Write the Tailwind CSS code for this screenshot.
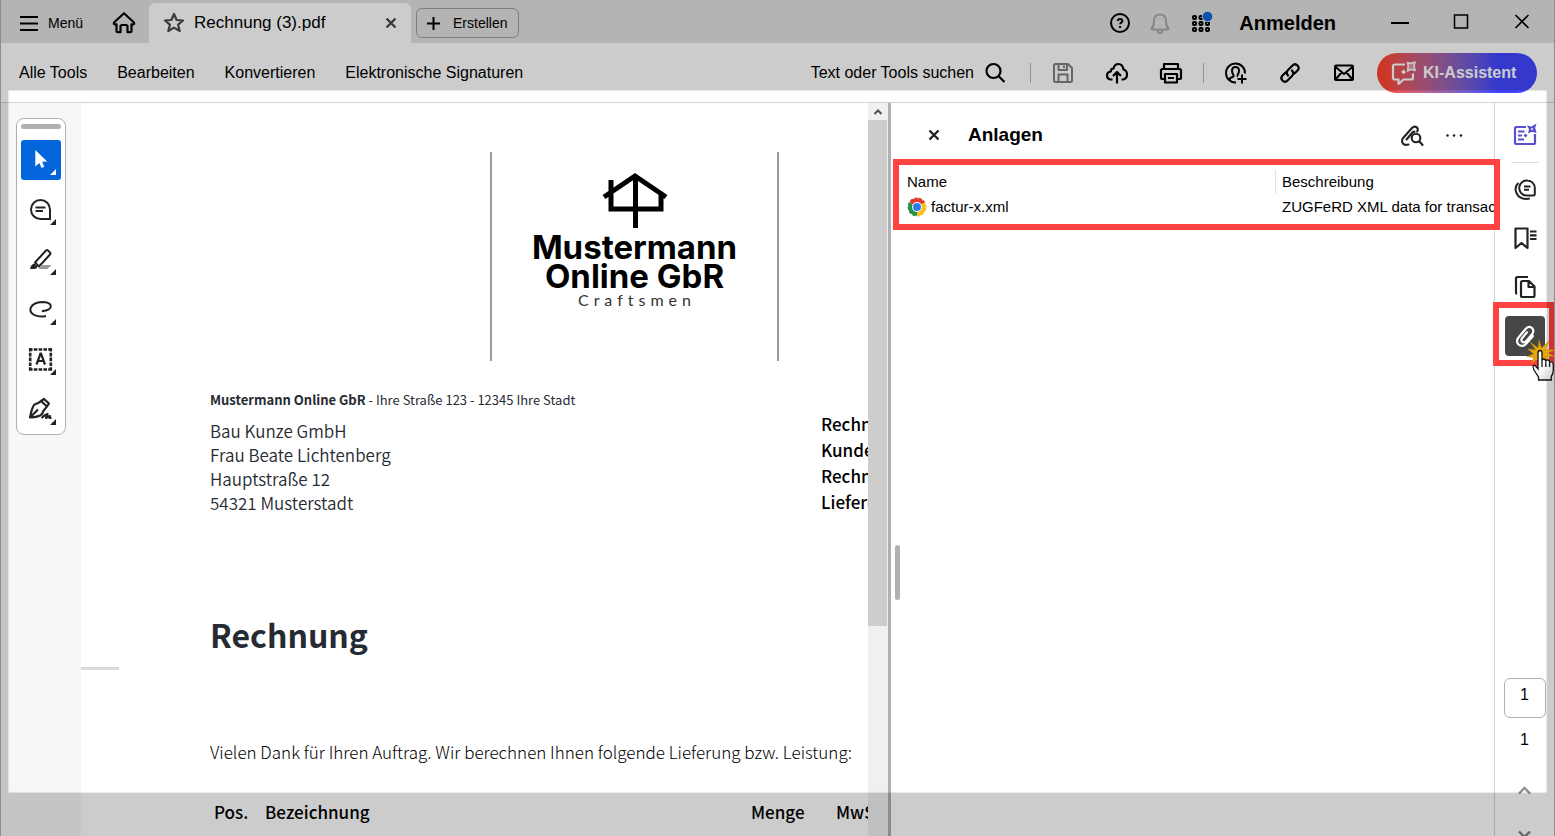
<!DOCTYPE html>
<html lang="de">
<head>
<meta charset="utf-8">
<title>Rechnung (3).pdf</title>
<script src="https://cdn.jsdelivr.net/npm/@tailwindcss/browser@4"></script>
</head>
<body class="relative flex h-screen flex-col overflow-hidden border-x border-[#8f8f8f] bg-white font-['Liberation_Sans',Arial,sans-serif] text-black">

<!-- Title bar -->
<header class="flex h-[43px] shrink-0 items-center bg-[#e1e1e1]">
  <button class="ml-[18px] flex items-center gap-[9px] pt-[2px] text-sm">
    <svg class="h-5 w-5" viewBox="0 0 20 20" fill="none" stroke="currentColor" stroke-width="2"><path d="M1 4h18M1 10.500h18M1 17h18"/></svg>
    Menü
  </button>
  <button class="ml-[29px] pt-[2px]" aria-label="Startseite">
    <svg class="h-6 w-6" viewBox="0 0 24 24" fill="none" stroke="currentColor" stroke-width="2.200" stroke-linejoin="round"><path d="M12 2.200 22 11.500q.6 1.800-1.200 1.900H19.500v6.400q0 1.400-1.400 1.400H15.500v-5.500q0-1.700-1.700-1.700h-3.600q-1.700 0-1.700 1.700v5.500H5.900q-1.400 0-1.400-1.400v-6.400H3.200q-1.800-.1-1.200-1.900Z"/></svg>
  </button>
  <div class="ml-[13px] mt-[3px] flex h-10 w-[262px] items-center rounded-t-md bg-white px-[14px]">
    <button aria-label="Favorit" class="text-[#4a4a4a]">
      <svg class="h-[22px] w-[22px]" viewBox="0 0 22 22" fill="none" stroke="currentColor" stroke-width="2.200" stroke-linejoin="round"><path d="m11 2 2.600 6 6.400.5-4.900 4.200 1.600 6.300-5.700-3.400-5.700 3.400 1.600-6.300L2 8.500 8.400 8Z"/></svg>
    </button>
    <span class="ml-[9px] flex-1 text-[17px]">Rechnung (3).pdf</span>
    <button aria-label="Tab schließen" class="text-[#4a4a4a]">
      <svg class="h-3 w-3" viewBox="0 0 12 12" stroke="currentColor" stroke-width="2.400"><path d="m1.500 1.500 9 9m0-9-9 9"/></svg>
    </button>
  </div>
  <button class="ml-[5px] mt-[3px] flex h-[30px] w-[103px] items-center gap-[13px] rounded-md border border-[#a0a0a0] pl-[10px] text-sm">
    <svg class="h-[13px] w-[13px]" viewBox="0 0 13 13" stroke="currentColor" stroke-width="2"><path d="M6.500 0v13M0 6.500h13"/></svg>
    Erstellen
  </button>
  <div class="ml-auto flex items-center">
    <button class="pt-[2px]" aria-label="Hilfe">
      <svg class="h-[22px] w-[22px]" viewBox="0 0 22 22" fill="none" stroke="currentColor" stroke-width="2"><circle cx="11" cy="11" r="9"/><path d="M8.800 9q0-2 2.300-2t2.200 1.900q0 1-1.100 1.700-1.100.7-1.100 1.700M11.100 14v1.900"/></svg>
    </button>
    <button class="ml-[18px] pt-[2px] text-[#a9a9a9]" aria-label="Benachrichtigungen">
      <svg class="h-[22px] w-[22px]" viewBox="0 0 22 22" fill="none" stroke="currentColor" stroke-width="2" stroke-linejoin="round"><path d="M2.500 16.500q2.500-2.500 2.500-7.500 0-6.500 6-6.500t6 6.500q0 5 2.500 7.500 0 1-1 1h-15q-1 0-1-1ZM8.700 18q0 3 2.300 3t2.300-3"/></svg>
    </button>
    <button class="ml-[19px]" aria-label="Apps">
      <svg class="h-6 w-6" viewBox="0 0 24 24" fill="none" stroke="currentColor" stroke-width="2"><g><rect x="3" y="6" width="3" height="3" rx="1"/><rect x="9.500" y="6" width="3" height="3" rx="1"/><rect x="3" y="12" width="3" height="3" rx="1"/><rect x="9.500" y="12" width="3" height="3" rx="1"/><rect x="16" y="12" width="3" height="3" rx="1"/><rect x="3" y="18" width="3" height="3" rx="1"/><rect x="9.500" y="18" width="3" height="3" rx="1"/><rect x="16" y="18" width="3" height="3" rx="1"/></g><circle cx="17.500" cy="6.500" r="5.200" fill="#0e66dc" stroke="#e1e1e1" stroke-width="1"/></svg>
    </button>
    <a href="#" class="ml-[25px] pt-[2px] text-xl font-bold">Anmelden</a>
    <button class="ml-[54px]" aria-label="Minimieren"><svg class="h-5 w-5" viewBox="0 0 20 20" stroke="currentColor" stroke-width="2"><path d="M1 11h18"/></svg></button>
    <button class="ml-[41px]" aria-label="Maximieren"><svg class="h-5 w-5" viewBox="0 0 20 20" fill="none" stroke="currentColor" stroke-width="1.500"><path d="M3.500 3h13v13h-13z"/></svg></button>
    <button class="ml-[41px] mr-[22px]" aria-label="Schließen"><svg class="h-5 w-5" viewBox="0 0 20 20" stroke="currentColor" stroke-width="1.600"><path d="m3.500 3 13 13m0-13-13 13"/></svg></button>
  </div>
</header>

<!-- Toolbar -->
<div class="flex h-[60px] shrink-0 items-center border-b border-[#d2d2d2] text-base">
  <nav class="ml-[18px] flex gap-[30px]">
    <a href="#">Alle Tools</a><a href="#">Bearbeiten</a><a href="#">Konvertieren</a><a href="#">Elektronische Signaturen</a>
  </nav>
  <div class="ml-auto flex items-center">
    <button class="flex items-center gap-[10px]">Text oder Tools suchen
      <svg class="h-[22px] w-[22px]" viewBox="0 0 22 22" fill="none" stroke="currentColor" stroke-width="2.200"><circle cx="9.500" cy="9" r="7"/><path d="m14.500 14 6 6"/></svg>
    </button>
    <span class="ml-6 h-5 w-px bg-[#b8b8b8]"></span>
    <button class="ml-5 text-[#808080]" aria-label="Speichern">
      <svg class="h-6 w-6" viewBox="0 0 24 24" fill="none" stroke="currentColor" stroke-width="2" stroke-linejoin="round"><path d="M4.500 3H17l4 4v12.500q0 1.500-1.500 1.500h-15Q3 21 3 19.500v-15Q3 3 4.500 3ZM7.500 3v6h8.500V3M7.500 21v-7.500h9V21M13 4.500v2.500"/></svg>
    </button>
    <button class="ml-[30px]" aria-label="In die Cloud laden">
      <svg class="h-6 w-6" viewBox="0 0 24 24" fill="none" stroke="currentColor" stroke-width="2.200" stroke-linejoin="round"><path d="M7.500 18.500H5.500Q2 18 2 14.500t4-4q-.5-3 2.500-3Q9.500 3 13.500 3t5 5.500q3.500 1 3.500 5t-3.800 5h-1.700M12 22.500V11.500M8 15l4-4 4 4"/></svg>
    </button>
    <button class="ml-[30px]" aria-label="Drucken">
      <svg class="h-6 w-6" viewBox="0 0 24 24" fill="none" stroke="currentColor" stroke-width="2.200" stroke-linejoin="round"><path d="M5 8V3h14v5M5.500 18H3q-1 0-1-1V9.500Q2 8 3.500 8h17Q22 8 22 9.500V17q0 1-1 1h-2.500M6 13h12v8.500H6zM9 17h6"/></svg>
    </button>
    <span class="ml-5 h-5 w-px bg-[#b8b8b8]"></span>
    <button class="ml-[20px]" aria-label="Freigeben">
      <svg class="h-6 w-6" viewBox="0 0 24 24" fill="none" stroke="currentColor" stroke-width="2"><path d="M21 12.500A9.500 9.500 0 1 0 12 21.500M5.500 18.500q.5-2 3-2.500 1.800-.4.800-2.200-1.300-1.800-1.300-4Q8 6 11.500 6T15 9.800q0 2.200-1.300 4-.7 1.200.3 1.700M18 13.500v9M13.500 18h9"/></svg>
    </button>
    <button class="ml-[30px]" aria-label="Link">
      <svg class="h-6 w-6" viewBox="0 0 24 24" fill="none" stroke="currentColor" stroke-width="2.200" stroke-linecap="round"><path d="M10 14.500Q7.500 11.500 10 9l4.500-4.500q2.500-2.500 5 0t0 5l-3 3M14 9.500q2.500 3 0 5.500l-4.500 4.500q-2.500 2.500-5 0t0-5l3-3"/></svg>
    </button>
    <button class="ml-[30px]" aria-label="E-Mail">
      <svg class="h-6 w-6" viewBox="0 0 24 24" fill="none" stroke="currentColor" stroke-width="2" stroke-linejoin="round"><path d="M4 4.500h16q1 0 1 1V18q0 1-1 1H4q-1 0-1-1V5.500q0-1 1-1ZM3 5.500l9 7.500 9-7.500M3.500 18.500l6-7M20.500 18.500l-6-7"/></svg>
    </button>
    <button class="ml-[21px] mr-[17px] flex h-10 w-40 items-center gap-[6px] rounded-full bg-linear-to-r from-[#ff442f] from-5% to-[#4146ff] to-75% pl-[14px] text-base font-bold text-white">
      <svg class="h-[26px] w-[26px]" viewBox="0 0 26 26" fill="none" stroke="currentColor" stroke-width="2.200" stroke-linejoin="round"><path d="M14 4.500H4Q2 4.500 2 6.500v11q0 2 2 2h3.500V24l5-4.500H20q2 0 2-2v-4"/><path d="m16.500 2.500 3.200 1L24 2l-1 4 1 4.500-4-1.200L16.500 11l.8-4.300Z" stroke-width="1.600" fill="#ffffff55"/><path d="m12.800 9.500 2.200 2.700-2.700 2.100-2.200-2.600Z" fill="currentColor" stroke="none"/></svg>
      KI-Assistent
    </button>
  </div>
</div>

<main class="flex min-h-0 flex-1">
  <!-- Quick tools -->
  <aside class="w-20 shrink-0 bg-[#f7f7f7] pl-[15px] pt-[15px]">
    <div class="flex h-[317px] w-[50px] flex-col items-center rounded-lg border border-[#b1b1b1] bg-white pt-[5px]">
      <span class="mb-[11px] h-[5px] w-10 rounded-full bg-[#b1b1b1]"></span>
      <div class="flex flex-col gap-[10px] text-[#222]">
        <button class="rounded-[3px] bg-[#0265dc] text-white" aria-label="Auswählen"><svg class="h-10 w-10" viewBox="0 0 40 40" fill="currentColor"><path d="M14.300 10v16.500l4-3.600 2.300 5.100 2.700-1.200-2.200-5 5.100-.3Z"/><path d="M35 29v6h-6Z"/></svg></button>
        <button aria-label="Kommentar"><svg class="h-10 w-10" viewBox="0 0 40 40" fill="none" stroke="currentColor" stroke-width="2"><path d="M19.500 10a9.500 9.500 0 0 0 0 19H29v-9.500A9.500 9.500 0 0 0 19.500 10ZM14.500 17.500h10M14.500 21h7.500"/><path d="M35 29v6h-6Z" fill="currentColor" stroke="none"/></svg></button>
        <button aria-label="Hervorheben"><svg class="h-10 w-10" viewBox="0 0 40 40" fill="none" stroke="currentColor" stroke-width="2"><path d="M21.500 25h9l-4 4h-9Z" fill="#999" stroke="none"/><path d="m14 22.500 11-12q1-1 2 0l2 2q1 1 0 2l-11 12Z" stroke-linejoin="round"/><path d="M9 29q1-5 4.500-5.500l3 3Q16 29 13 29Z" fill="currentColor" stroke="none"/><path d="M35 29v6h-6Z" fill="currentColor" stroke="none"/></svg></button>
        <button aria-label="Freihand"><svg class="h-10 w-10" viewBox="0 0 40 40" fill="none" stroke="currentColor" stroke-width="2"><path d="M25 26q-6 1.500-11.500-.8Q8 22.500 9.800 17.500 12.500 12.500 21 12q8 0 8.800 3.800.5 4.500-9 5.400"/><path d="M35 29v6h-6Z" fill="currentColor" stroke="none"/></svg></button>
        <button aria-label="Textfeld"><svg class="h-10 w-10" viewBox="0 0 40 40" fill="none" stroke="currentColor" stroke-width="3"><path d="M8 9.500h23M8 29.500h23M9.200 8v23M29.800 8v23" stroke-width="2.600" stroke-dasharray="3.600 1.200"/><path d="m15.500 24.500 4-11h.5l4 11M16.500 21h6.500" stroke-width="2.200"/><path d="M35 29v6h-6Z" fill="currentColor" stroke="none"/></svg></button>
        <button aria-label="Unterschreiben"><svg class="h-10 w-10" viewBox="0 0 40 40" fill="none" stroke="currentColor" stroke-width="2.200" stroke-linejoin="round"><path d="m20 11 3-2 5 4.500-2 3Zm0 0q-2 2-6.500 3.500Q11 17 9 27.500q9.500-.5 12-3.500 1.500-4 5-7.500M9.500 27l7.500-7.500M20.500 28q3-3 6-4l-1.500 4q2-1.500 4-2l-.5 2h2"/><path d="M35 29v6h-6Z" fill="currentColor" stroke="none"/></svg></button>
      </div>
    </div>
  </aside>

  <!-- Invoice page -->
  <article class="min-w-0 flex-1 overflow-hidden font-['Noto_Sans_CJK_SC',sans-serif] text-[#262b33]">
    <div class="ml-[409px] mt-[49px] flex h-[209px] w-[289px] flex-col items-center border-x-2 border-[#9b9b9b] pt-[20px] font-['Inter',sans-serif] text-black">
      <svg class="h-[61px] w-[70px]" viewBox="0 0 70 61" fill="none" stroke="currentColor" stroke-width="5"><path d="M4 25 35 4l31 21M11 8v29h50V21M35.500 4v52"/></svg>
      <div class="text-center text-[33px] leading-[29px] font-bold">Mustermann<br>Online GbR</div>
      <div class="pl-[5px] font-['Lato',sans-serif] text-base leading-[18px] tracking-[5px] text-[#333]">Craftsmen</div>
    </div>
    <div class="ml-[129px] mt-[29px] flex">
      <div class="w-[611px] shrink-0">
        <p class="text-[13px] leading-5"><b>Mustermann Online GbR</b> - Ihre Straße 123 - 12345 Ihre Stadt</p>
        <p class="mt-[9px] text-[17px] leading-6 font-[350]">Bau Kunze GmbH<br>Frau Beate Lichtenberg<br>Hauptstraße 12<br>54321 Musterstadt</p>
      </div>
      <div class="pt-[21px] text-[17px] leading-[26px] font-medium whitespace-nowrap text-black">Rechnungsnummer<br>Kundennummer<br>Rechnungsdatum<br>Lieferdatum</div>
    </div>
    <h1 class="ml-[129px] mt-[95px] text-[32px] leading-[48px] font-bold">Rechnung</h1>
    <div class="mt-[9px] h-[3px] w-[38px] bg-[#dbdbdb]"></div>
    <p class="ml-[129px] mt-[70px] text-[17px] leading-6 font-light whitespace-nowrap text-black">Vielen Dank für Ihren Auftrag. Wir berechnen Ihnen folgende Lieferung bzw. Leistung:</p>
    <table class="ml-[133px] mt-[36px] w-[720px] table-fixed text-left text-[17px] leading-6 text-black">
      <thead><tr><th class="w-[51px] font-medium">Pos.</th><th class="w-[486px] font-medium">Bezeichnung</th><th class="w-[85px] font-medium">Menge</th><th class="font-medium">MwSt.</th></tr></thead>
    </table>
  </article>
  <div class="flex w-5 shrink-0 flex-col bg-[#f0f0f0] pr-px">
    <button class="flex h-[17px] shrink-0 items-center justify-center" aria-label="Nach oben"><svg class="h-2 w-2" viewBox="0 0 8 8" fill="none" stroke="#505050" stroke-width="2"><path d="m.5 6 3.500-3.500L7.500 6"/></svg></button>
    <div class="h-[69%] bg-[#cdcdcd]"></div>
  </div>

  <!-- Attachments panel -->
  <section class="relative w-[606px] shrink-0 border-l-[3px] border-[#b0b0b0]">
    <div class="flex h-16 items-center pl-[37px] pr-[30px]">
      <button aria-label="Bereich schließen" class="text-[#222]"><svg class="h-3 w-3" viewBox="0 0 12 12" stroke="currentColor" stroke-width="2.400"><path d="m1.500 1.500 9 9m0-9-9 9"/></svg></button>
      <h2 class="ml-7 text-[19px] font-bold">Anlagen</h2>
      <button class="ml-auto text-[#222]" aria-label="Anlagen durchsuchen">
        <svg class="h-6 w-6" viewBox="0 0 24 24" fill="none" stroke="currentColor" stroke-width="2.100" stroke-linecap="round"><path d="M8.500 21.500Q3 23 2 18.500q-.3-2 1.500-4L12 5q2.500-2.500 5-.5 1.600 1.800.2 4M6.500 16.500 12 10q1-1.500 2.500-1.300"/><circle cx="16" cy="15" r="4.300"/><path d="m19.500 18.500 3 3.500"/></svg>
      </button>
      <button class="ml-5 text-[#222]" aria-label="Weitere Optionen"><svg class="h-5 w-5" viewBox="0 0 20 20" fill="currentColor"><circle cx="3.500" cy="10.500" r="1.300"/><circle cx="10" cy="10.500" r="1.300"/><circle cx="17" cy="10.500" r="1.300"/></svg></button>
    </div>
    <table class="w-full table-fixed text-left text-[15px]">
      <thead><tr class="h-[29px]"><th class="w-[385px] pl-4 font-normal"><span class="block leading-6">Name</span></th><th class="font-normal"><span class="-ml-px block border-l border-[#e1e1e1] pl-[6px] leading-6">Beschreibung</span></th></tr></thead>
      <tbody><tr class="h-5"><td class="pl-4"><span class="flex items-center gap-1">
        <svg class="h-5 w-5" viewBox="0 0 20 20" fill="none"><circle cx="10" cy="10" r="7" stroke="#e33b2e" stroke-width="5" stroke-dasharray="14.660 29.320" transform="rotate(-150 10 10)"/><circle cx="10" cy="10" r="7" stroke="#fbc116" stroke-width="5" stroke-dasharray="14.660 29.320" transform="rotate(-30 10 10)"/><circle cx="10" cy="10" r="7" stroke="#229342" stroke-width="5" stroke-dasharray="14.660 29.320" transform="rotate(90 10 10)"/><circle cx="10" cy="10" r="9.500" stroke="#fff" stroke-width="1.500" stroke-dasharray="1.500 3.500"/><circle cx="10" cy="10" r="5" fill="#fff"/><circle cx="10" cy="10" r="4" fill="#2a7bf0"/></svg>
        factur-x.xml</span></td><td class="overflow-hidden pl-[6px] whitespace-nowrap">ZUGFeRD XML data for transaction</td></tr></tbody>
    </table>
    <span class="absolute bottom-[236px] left-1 h-[55px] w-[5px] rounded-full bg-[#b1b1b1]"></span>
    <div class="pointer-events-none absolute top-[56px] -right-[6px] left-[2px] z-20 h-[71px] border-[6px] border-[#ff4242]"></div>
  </section>

  <!-- Side rail -->
  <aside class="flex w-[60px] shrink-0 flex-col items-center border-l border-[#d2d2d2] text-[#222]">
    <button class="mt-5 text-[#5a4fcf]" aria-label="Zusammenfassung">
      <svg class="h-6 w-6" viewBox="0 0 24 24" fill="none" stroke="currentColor" stroke-width="2.200"><path d="M13 4H3.500Q2 4 2 5.500v14Q2 21 3.500 21h17q1.500 0 1.500-1.500V11"/><path d="M5 8.500h6.500M5 12.500h4M5 16.500h6" stroke-width="2"/><path d="m12.500 10.500 2 2-2 2-2-2Z" fill="currentColor" stroke="none"/><path d="m14 2.500 4.500 1L23.500.5l-1.300 4.200L23.500 10l-4.500-1.300-4 1.800 1-4.200Z" fill="currentColor" stroke="none"/><circle cx="19" cy="6" r=".9" fill="#fff" stroke="none"/></svg>
    </button>
    <span class="mt-[15px] h-px w-7 bg-[#dcdcdc]"></span>
    <button class="mt-[14px]" aria-label="Kommentare"><svg class="h-6 w-6" viewBox="0 0 24 24" fill="none" stroke="currentColor" stroke-width="2.200"><path d="M14.500 3.500a7.500 7.500 0 0 0-1.500 15h7.500q1.300 0 1.300-1.300v-6A7.500 7.500 0 0 0 14.500 3.500ZM11 9.500h6.500M11 12.700h5" stroke-width="2"/><path d="M5.500 6Q1.800 9 2.800 14q1.500 6 7 7.500 3.500.8 7 0" stroke-width="2"/></svg></button>
    <button class="mt-[25px]" aria-label="Lesezeichen"><svg class="h-6 w-6" viewBox="0 0 24 24" fill="none" stroke="currentColor" stroke-width="2.200" stroke-linejoin="round"><path d="M2.500 2.500h12v19.500l-6-5-6 5ZM17 5.500h6.500M17 9.300h6.500M17 13h6.500" /></svg></button>
    <button class="mt-[25px]" aria-label="Seiten"><svg class="h-6 w-6" viewBox="0 0 24 24" fill="none" stroke="currentColor" stroke-width="2.200" stroke-linejoin="round"><path d="M15 2H4.500Q3 2 3 3.500v14q0 1.200 1 1.500M9.500 6H16l5.500 5.500v9q0 1.500-1.500 1.500H9.500Q8 22 8 20.500v-13Q8 6 9.500 6ZM15.500 6v6h6"/></svg></button>
    <div class="relative mt-[17px]">
      <button class="flex h-10 w-10 items-center justify-center rounded bg-[#464646] text-white" aria-label="Anlagen"><svg class="h-6 w-6" viewBox="0 0 24 24" fill="none" stroke="currentColor" stroke-width="2.200" stroke-linecap="round"><path d="m20 12-7 8q-4 3.500-7.500.5Q2.500 17 5.500 13.500l7.500-9q3-2.800 6-.5 2.500 2.500.3 6L13 17.500q-2 1.500-3.800.3-1.500-1.500-.2-3.500l5-6"/></svg></button>
      <div class="pointer-events-none absolute -top-[14px] -left-[12px] h-16 w-[62px] border-[6px] border-[#ff4242]"></div>
      <svg class="pointer-events-none absolute top-6 left-[22px] z-40 h-[44px] w-7" viewBox="0 0 28 44">
        <defs><linearGradient id="hand" x1="0" y1="0" x2="1" y2="1"><stop offset=".5" stop-color="#fff"/><stop offset="1" stop-color="#c4c4c4"/></linearGradient></defs>
        <path d="m12 0 2.500 8L22 1l-3.500 8.500 9.500.5-8 3 8 3-9 .5 5 5-8-3-3 6-2-6-7 5 3-6-7-1 6.500-2.500L1 9l8 1L3 2l8 6Z" fill="#e8a808" stroke="#b78310" stroke-width=".6"/>
        <path d="M11 27V13q0-2.500 2-2.500t2 2.500v8q0-2 1.800-2t2 2.500q.2-2 2.100-1.500 1.900.3 1.800 2.500.7-1 2-.5 1.600.5 1.600 3v5q0 4-2 6.500v3.500H11.500V37L7 30q-1.500-3-.7-4.500Q7.500 24 11 29Z" fill="url(#hand)" stroke="#111" stroke-width="1.300"/><path d="M15 21v6M18.800 21.500V27M22.600 22.500V27" stroke="#111" stroke-width="1.300"/>
      </svg>
    </div>
    <input type="text" value="1" aria-label="Seite" class="mt-auto h-10 w-[42px] rounded-md border border-[#b1b1b1] bg-white pb-[6px] text-center text-base text-black">
    <span class="mt-[10px] text-base leading-6 text-black">1</span>
    <button class="mt-[34px] text-[#929292]" aria-label="Vorherige Seite"><svg class="h-[9px] w-[13px]" viewBox="0 0 13 9" fill="none" stroke="currentColor" stroke-width="2.400"><path d="m1 7.500 5.500-5.500L12 7.500"/></svg></button>
    <button class="-mb-[3px] mt-[35px] text-[#808080]" aria-label="Nächste Seite"><svg class="h-[9px] w-[13px]" viewBox="0 0 13 9" fill="none" stroke="currentColor" stroke-width="2.400"><path d="m1 1.500 5.500 5.500L12 1.500"/></svg></button>
  </aside>
</main>

<!-- Spotlight: everything outside the frame is dimmed -->
<div class="pointer-events-none absolute top-[90px] right-[7px] bottom-[43px] left-[7px] z-10 shadow-[0_0_0_1999px_rgba(0,0,0,0.2),inset_0_0_2px_rgba(0,0,0,0.3)]"></div>
</body>
</html>
